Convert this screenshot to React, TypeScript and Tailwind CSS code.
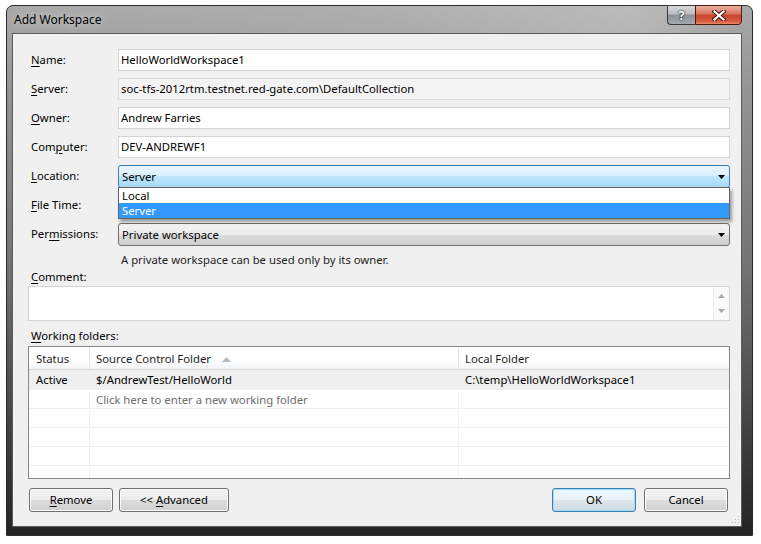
import React from "react"

function U({ children }: { children: React.ReactNode }) {
  return <span className="underline underline-offset-[2px] decoration-1">{children}</span>
}

function Arrow() {
  return (
    <svg width="7" height="4" viewBox="0 0 7 4" className="shrink-0">
      <path d="M0 0h7L3.5 4z" fill="#000" />
    </svg>
  )
}

function Label({ children }: { children: React.ReactNode }) {
  return <div className="w-[90px] shrink-0 pl-[3px] flex items-center">{children}</div>
}

function TextBox({ value, readOnly }: { value: string; readOnly?: boolean }) {
  return (
    <div
      className={
        readOnly
          ? "flex-1 h-[22px] border border-[#dadada] bg-[#f3f3f3] px-[2px] flex items-center"
          : "flex-1 h-[22px] border border-[#d3d3d3] bg-white px-[2px] flex items-center"
      }
    >
      {value}
    </div>
  )
}

const btn =
  "h-[24px] w-[84px] border border-[#707070] rounded-[3px] bg-[linear-gradient(to_bottom,#f2f2f2_0%,#ebebeb_50%,#dddddd_50%,#cfcfcf_100%)] shadow-[inset_0_0_0_1px_#fcfcfc] flex items-center justify-center"

export default function App() {
  const rows = [
    { status: "Active", src: "$/AndrewTest/HelloWorld", local: "C:\\temp\\HelloWorldWorkspace1", active: true },
    { status: "", src: "Click here to enter a new working folder", local: "", hint: true },
    { status: "", src: "", local: "" },
    { status: "", src: "", local: "" },
    { status: "", src: "", local: "" },
    { status: "", src: "", local: "" },
    { status: "", src: "", local: "" },
  ]

  return (
    <div className="w-[761px] h-[544px] bg-white pl-[6px] pt-[5px] font-['Segoe_UI','Noto_Sans',sans-serif] text-[11.3px] leading-[14px] text-black">
      {/* window frame */}
      <div className="w-[747px] h-[531px] rounded-t-[7px] border border-[#2b2b2b] bg-[linear-gradient(to_bottom,#a9a9a9_0%,#959595_15%,#727272_50%,#3a3a3a_85%,#242424_100%)] pl-[5px] pr-[10px] pb-[8px] flex flex-col">
        {/* title bar */}
        <div className="h-[27px] flex justify-between bg-[linear-gradient(90deg,rgba(255,255,255,0)_0%,rgba(255,255,255,0.08)_50%,rgba(255,255,255,0.22)_85%,rgba(255,255,255,0)_100%)]">
          <div className="self-center pl-[2px] pt-[1px] text-[12px] [text-shadow:0_0_8px_rgba(255,255,255,0.8)]">Add Workspace</div>
          <div className="flex -mt-[1px] h-[20px]">
            <div className="w-[28px] h-[20px] border border-[#3a3a3a] border-r-0 rounded-bl-[4px] bg-[linear-gradient(to_bottom,#d6d9dc_0%,#b9bdc1_45%,#8c9196_50%,#a4a9ad_100%)] flex items-center justify-center text-white font-bold text-[13px] [text-shadow:0_0_2px_#000,0_0_1px_#000]">
              ?
            </div>
            <div className="w-[47px] h-[20px] border border-[#4d1a10] rounded-br-[4px] bg-[linear-gradient(to_bottom,#eab0a2_0%,#d8725b_45%,#c6432b_50%,#d65a3e_85%,#e98a6a_100%)] flex items-center justify-center">
              <svg width="14" height="11" viewBox="0 0 14 11">
                <path d="M2.5 1.5L11.5 9.5M11.5 1.5L2.5 9.5" stroke="#3a1008" strokeWidth="4" strokeLinecap="square" />
                <path d="M2.5 1.5L11.5 9.5M11.5 1.5L2.5 9.5" stroke="#fff" strokeWidth="2.2" strokeLinecap="square" />
              </svg>
            </div>
          </div>
        </div>

        {/* client area */}
        <div className="w-[730px] h-[494px] border border-[#5c5c5c] bg-[#f0f0f0] pt-[15px] pl-[15px] pr-[11px] flex flex-col relative">
          <div className="flex flex-col gap-[7px]">
            <div className="flex h-[22px]">
              <Label><span><U>N</U>ame:</span></Label>
              <TextBox value="HelloWorldWorkspace1" />
            </div>
            <div className="flex h-[22px]">
              <Label><span><U>S</U>erver:</span></Label>
              <TextBox value="soc-tfs-2012rtm.testnet.red-gate.com\DefaultCollection" readOnly />
            </div>
            <div className="flex h-[22px]">
              <Label><span><U>O</U>wner:</span></Label>
              <TextBox value="Andrew Farries" />
            </div>
            <div className="flex h-[22px]">
              <Label><span>Com<U>p</U>uter:</span></Label>
              <TextBox value="DEV-ANDREWF1" />
            </div>
            <div className="flex h-[22px]">
              <Label><span><U>L</U>ocation:</span></Label>
              <div className="flex-1 relative">
                <div className="h-[23px] border border-[#3c7fb1] rounded-[3px] bg-[linear-gradient(to_bottom,#eaf6fd_0%,#d9f0fc_45%,#bee6fd_50%,#a7d9f5_100%)] pl-[3px] pr-[4px] flex items-center justify-between">
                  <span>Server</span>
                  <Arrow />
                </div>
                {/* open dropdown list */}
                <div className="absolute left-0 right-0 top-[22px] z-10 bg-white border border-[#646464] shadow-[2px_3px_3px_rgba(0,0,0,0.35)] leading-[13px]">
                  <div className="h-[15px] pl-[3px] flex items-center">Local</div>
                  <div className="h-[15px] pl-[3px] flex items-center bg-[#3399ff] text-white">Server</div>
                </div>
              </div>
            </div>
            <div className="flex h-[22px]">
              <Label><span><U>F</U>ile Time:</span></Label>
              <div className="flex-1 h-[23px] border border-[#707070] rounded-[3px] bg-[#e5e5e5]" />
            </div>
            <div className="flex h-[22px]">
              <Label><span>Per<U>m</U>issions:</span></Label>
              <div className="flex-1 h-[23px] border border-[#707070] rounded-[3px] bg-[linear-gradient(to_bottom,#f2f2f2_0%,#ebebeb_50%,#dddddd_50%,#cfcfcf_100%)] pl-[3px] pr-[4px] flex items-center justify-between">
                <span>Private workspace</span>
                <Arrow />
              </div>
            </div>
          </div>

          <div className="mt-[7px] h-[16px] pl-[93px] flex items-center text-[#1e1e1e]">
            A private workspace can be used only by its owner.
          </div>
          <div className="h-[16px] pl-[3px] pt-[1px] flex items-center">
            <span><U>C</U>omment:</span>
          </div>

          {/* comment box */}
          <div className="mt-[2px] h-[35px] border border-[#d3d3d3] bg-white flex justify-end">
            <div className="w-[16px] h-full border-l border-[#ececec] bg-[#fafafa] flex flex-col items-center justify-between py-[7px]">
              <svg width="7" height="4" viewBox="0 0 7 4"><path d="M0 4h7L3.5 0z" fill="#a8a8a8" /></svg>
              <svg width="7" height="4" viewBox="0 0 7 4"><path d="M0 0h7L3.5 4z" fill="#a8a8a8" /></svg>
            </div>
          </div>

          <div className="mt-[7px] h-[16px] pl-[3px] flex items-center">
            <span><U>W</U>orking folders:</span>
          </div>

          {/* working folders grid */}
          <div className="mt-[2px] h-[133px] border border-[#828790] bg-white overflow-hidden">
            <div className="grid grid-cols-[61px_369px_1fr] h-[23px] border-b border-[#d5d5d5] bg-[linear-gradient(to_bottom,#ffffff_0%,#ffffff_60%,#f3f4f6_100%)] text-[#1e1e1e]">
              <div className="pl-[7px] pt-[2px] flex items-center border-r border-[#e3e3e3]">Status</div>
              <div className="pl-[6px] pt-[2px] flex items-center gap-[11px] border-r border-[#e3e3e3]">
                <span>Source Control Folder</span>
                <svg width="9" height="5" viewBox="0 0 9 5"><path d="M0 5h9L4.5 0z" fill="#b4b9bf" /></svg>
              </div>
              <div className="pl-[6px] pt-[2px] flex items-center">Local Folder</div>
            </div>
            {rows.map((r, i) => (
              <div
                key={i}
                className={
                  r.active
                    ? "grid grid-cols-[61px_369px_1fr] h-[20px] pt-[1px] border-b border-[#f0f0f0] bg-[#efefef]"
                    : "grid grid-cols-[61px_369px_1fr] h-[19px] pt-[1px] border-b border-[#f0f0f0]"
                }
              >
                <div className="pl-[7px] flex items-center border-r border-[#f0f0f0]">{r.status}</div>
                <div className={r.hint ? "pl-[6px] flex items-center border-r border-[#f0f0f0] text-[#6d6d6d]" : "pl-[6px] flex items-center border-r border-[#f0f0f0]"}>
                  {r.src}
                </div>
                <div className="pl-[6px] flex items-center">{r.local}</div>
              </div>
            ))}
          </div>

          {/* buttons */}
          <div className="mt-[9px] flex pl-[1px] pr-[2px]">
            <div className="flex gap-[6px]">
              <div className={btn}><span><U>R</U>emove</span></div>
              <div className={btn + " w-[110px]"}><span>&lt;&lt; <U>A</U>dvanced</span></div>
            </div>
            <div className="ml-auto flex gap-[8px]">
              <div className="h-[24px] w-[84px] border border-[#3c7fb1] rounded-[3px] bg-[linear-gradient(to_bottom,#eaf6fd_0%,#eaf2f7_50%,#dde6ec_50%,#cfdce5_100%)] shadow-[inset_0_0_0_1px_#9fdcf7] flex items-center justify-center">
                OK
              </div>
              <div className={btn}>Cancel</div>
            </div>
          </div>

          {/* size grip */}
          <svg width="9" height="9" viewBox="0 0 9 9" className="absolute right-[1px] bottom-[2px]">
            <rect x="7" y="1" width="1" height="1" fill="#b8b8b8" />
            <rect x="4" y="4" width="1" height="1" fill="#b8b8b8" />
            <rect x="7" y="4" width="1" height="1" fill="#b8b8b8" />
            <rect x="1" y="7" width="1" height="1" fill="#b8b8b8" />
            <rect x="4" y="7" width="1" height="1" fill="#b8b8b8" />
            <rect x="7" y="7" width="1" height="1" fill="#b8b8b8" />
          </svg>
        </div>
      </div>
    </div>
  )
}
